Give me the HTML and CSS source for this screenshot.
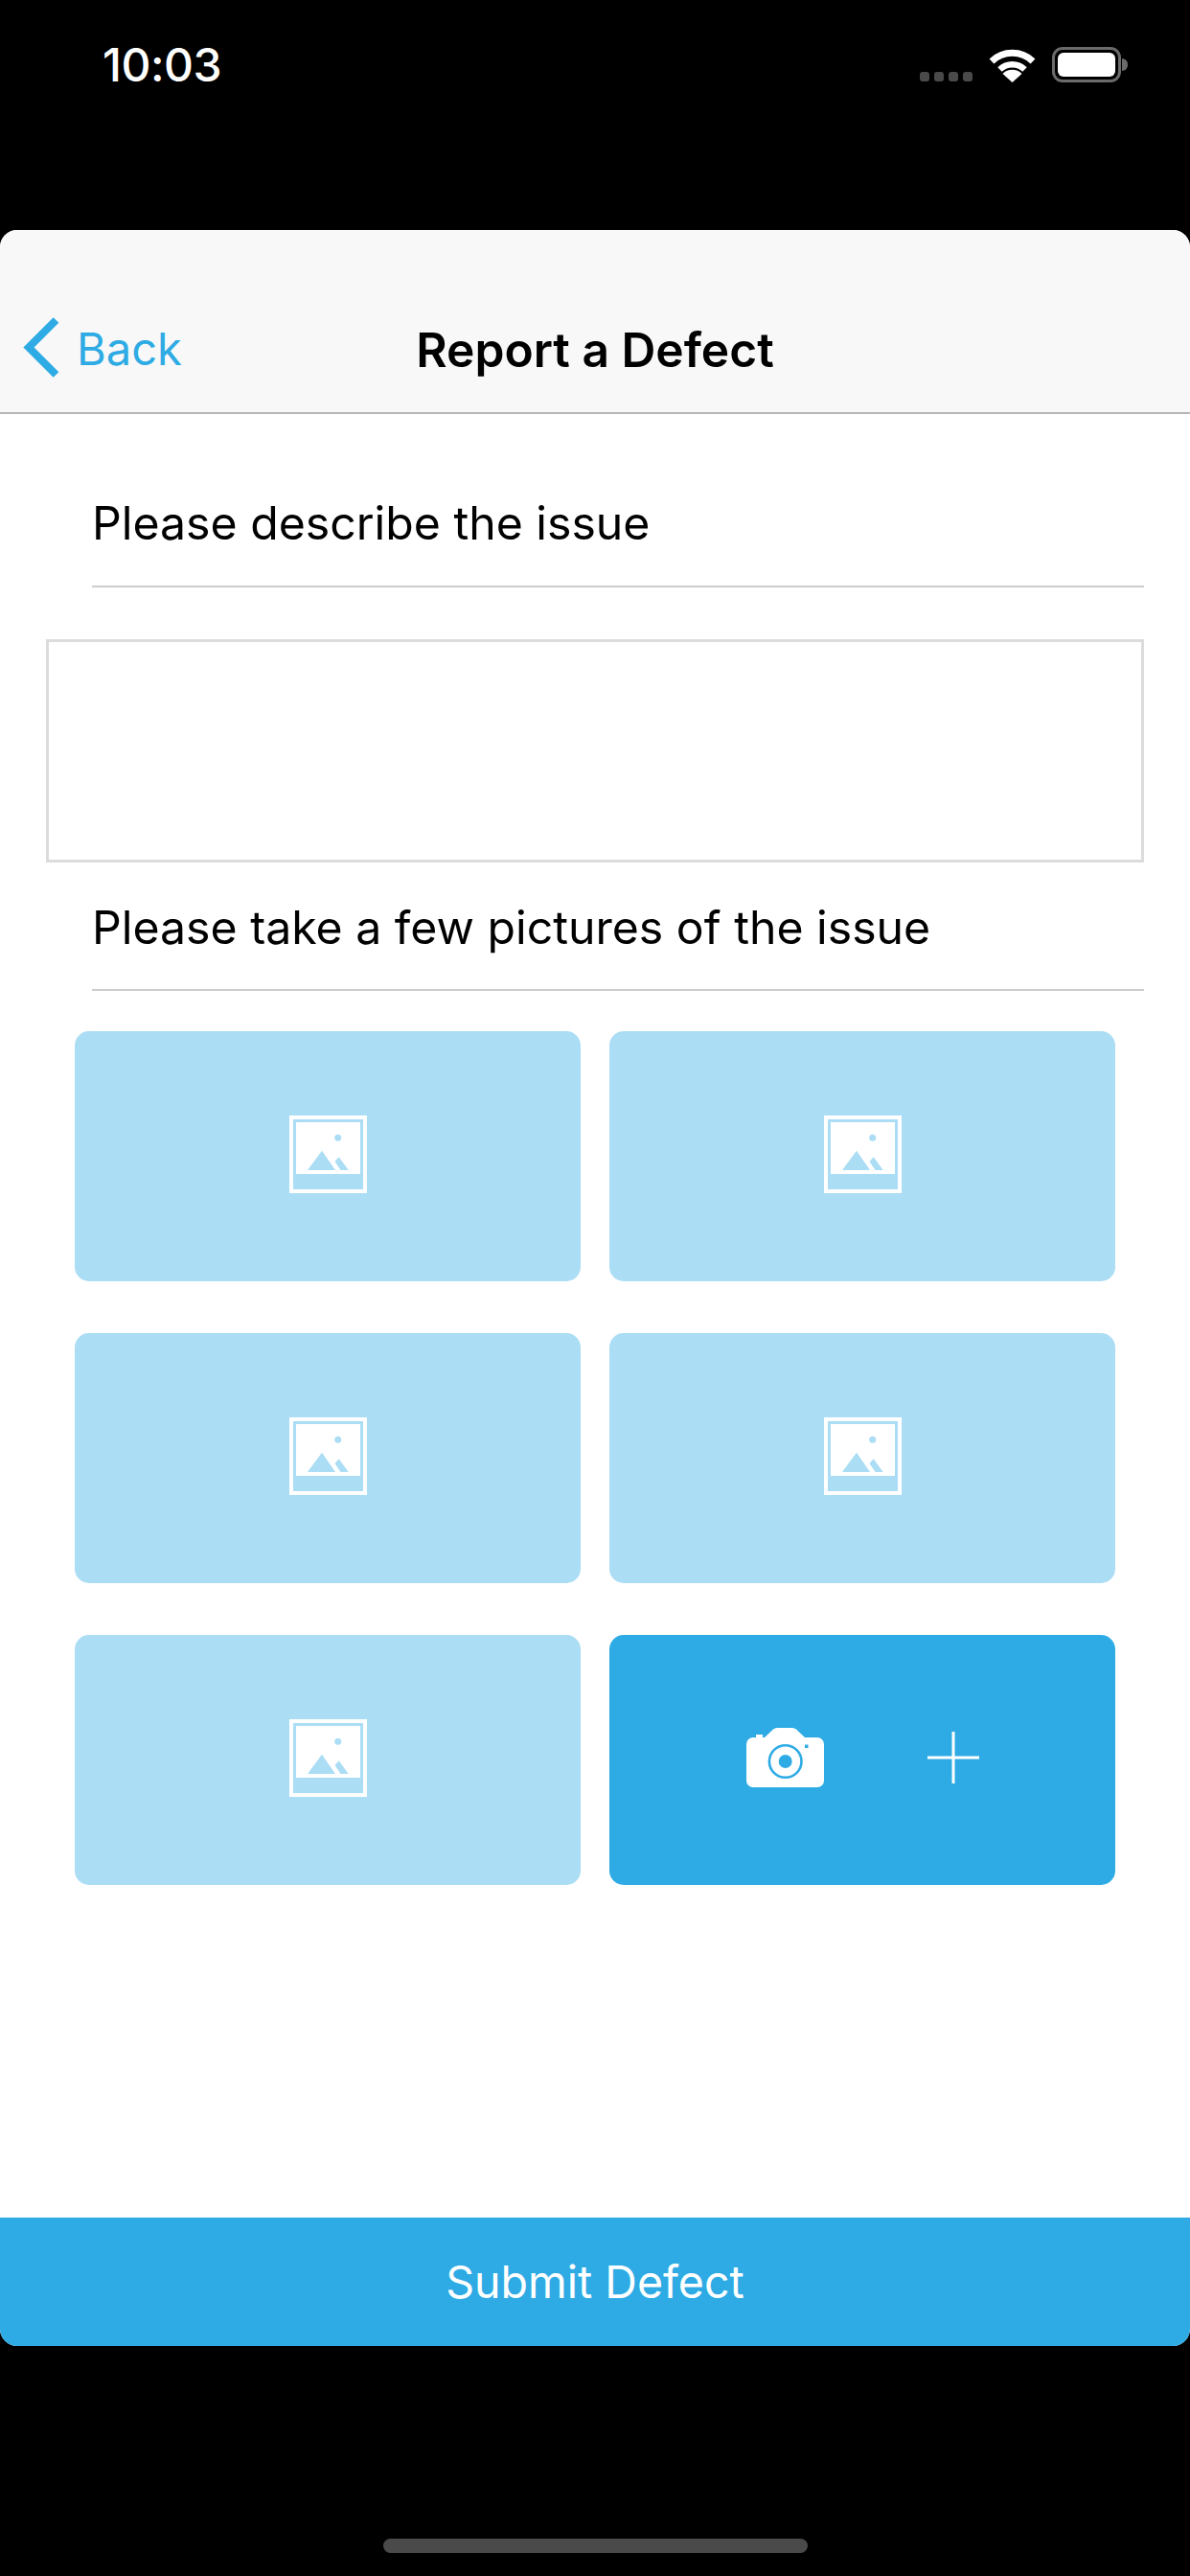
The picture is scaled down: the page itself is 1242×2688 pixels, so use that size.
FILE: index.html
```html
<!DOCTYPE html>
<html lang="en">
<head>
    <meta charset="UTF-8">
    <title>Report a Defect</title>
    <link rel="stylesheet" href="styles.css">
</head>
<body>
    <svg class="sprites" width="0" height="0">
        <symbol id="photo" viewBox="0 0 81 81">
            <rect x="2" y="2" width="77" height="77" fill="none" stroke="#fff" stroke-width="4"/>
            <rect x="7" y="7" width="67" height="54" fill="#fff"/>
            <circle cx="50.7" cy="23.3" r="3.5" fill="#abddf5"/>
            <polygon points="19,57 34,36.7 48,57" fill="#abddf5"/>
            <polygon points="47.5,48 51.7,43.3 61.7,57 53.5,57" fill="#abddf5"/>
        </symbol>
    </svg>

    <header class="status-bar">
        <span class="time">10:03</span>
        <div class="status-icons">
            <div class="signal"><i></i><i></i><i></i><i></i></div>
            <svg class="wifi" width="49" height="36" viewBox="0 0 49 36">
                <path d="M3 14 A31 31 0 0 1 46 14" fill="none" stroke="#fff" stroke-width="7"/>
                <path d="M11.5 22.5 A19 19 0 0 1 37.5 22.5" fill="none" stroke="#fff" stroke-width="6.5"/>
                <path d="M24.5 36 L14.5 27 A14 14 0 0 1 34.5 27 Z" fill="#fff"/>
            </svg>
            <div class="battery"><div class="battery-level"></div></div>
            <div class="battery-nub"></div>
        </div>
    </header>

    <main class="sheet">
        <nav class="nav-bar">
            <a class="back">
                <svg class="back-arrow" width="38" height="63" viewBox="0 0 38 63">
                    <path d="M34.5 3 L6 31.5 L34.5 60" fill="none" stroke="#2eabe4" stroke-width="8"/>
                </svg>
                <span class="back-label">Back</span>
            </a>
            <h1 class="nav-title">Report a Defect</h1>
        </nav>

        <div class="field-label first"><span>Please describe the issue</span></div>
        <textarea class="description"></textarea>
        <div class="field-label"><span>Please take a few pictures of the issue</span></div>

        <div class="photo-grid">
            <div class="tile"><svg class="photo-icon"><use href="#photo"/></svg></div>
            <div class="tile"><svg class="photo-icon"><use href="#photo"/></svg></div>
            <div class="tile"><svg class="photo-icon"><use href="#photo"/></svg></div>
            <div class="tile"><svg class="photo-icon"><use href="#photo"/></svg></div>
            <div class="tile"><svg class="photo-icon"><use href="#photo"/></svg></div>
            <div class="tile add">
                <svg width="81" height="62" viewBox="0 0 81 62">
                    <rect x="10" y="7" width="7" height="6" fill="#fff"/>
                    <path d="M19 10 L28 1.5 Q30 0 32 0 L48 0 Q50 0 52 1.5 L61 10 Z" fill="#fff"/>
                    <rect x="0" y="10" width="81" height="52" rx="7" fill="#fff"/>
                    <circle cx="40.7" cy="35" r="16.8" fill="#fff" stroke="#2eabe4" stroke-width="2.6"/>
                    <circle cx="40.7" cy="35" r="7" fill="#2eabe4"/>
                    <rect x="61" y="17.5" width="3.5" height="3.5" fill="#2eabe4"/>
                </svg>
                <svg width="54" height="54" viewBox="0 0 54 54">
                    <path d="M27 0 V54 M0 27 H54" stroke="#fff" stroke-width="3"/>
                </svg>
            </div>
        </div>

        <button class="submit">Submit Defect</button>
    </main>

    <div class="home-area"><div class="home-bar"></div></div>
</body>
</html>
```

FILE: styles.css
```css
* {
    box-sizing: border-box;
}
html, body {
    margin: 0;
    height: 100%;
}
body {
    background-color: #000;
    font-family: Inter, "Liberation Sans", sans-serif;
    width: 1242px;
    height: 2688px;
    overflow: hidden;
    display: flex;
    flex-direction: column;
}
.sprites {
    display: block;
    height: 0;
}

/* Status bar */
.status-bar {
    height: 240px;
    padding: 43px 65px 0 107px;
    display: flex;
    justify-content: space-between;
    align-items: flex-start;
    color: #fff;
}
.time {
    font-size: 48px;
    font-weight: 500;
    line-height: 50px;
    letter-spacing: -0.5px;
}
.status-icons {
    display: flex;
    align-items: flex-start;
    padding-top: 6px;
}
.signal {
    display: flex;
    gap: 5px;
    margin-top: 26px;
    margin-right: 17px;
}
.signal i {
    width: 10px;
    height: 10px;
    border-radius: 3px;
    background-color: #4a4a4a;
}
.wifi {
    margin-top: 1px;
    margin-right: 17px;
}
.battery {
    width: 72px;
    height: 37px;
    border: 3px solid #6b6b6b;
    border-radius: 11px;
    padding: 3px;
}
.battery-level {
    width: 100%;
    height: 100%;
    border-radius: 6px;
    background-color: #fff;
}
.battery-nub {
    width: 6px;
    height: 13px;
    margin: 12px 0 0 1px;
    border-radius: 0 6px 6px 0;
    background-color: #6b6b6b;
}

/* Sheet */
.sheet {
    height: 2208px;
    background-color: #fff;
    border-radius: 18px;
    overflow: hidden;
    display: flex;
    flex-direction: column;
}
.nav-bar {
    height: 192px;
    padding-top: 91px;
    background-color: #f8f8f8;
    border-bottom: 2px solid #b8b8b8;
    position: relative;
    display: flex;
    justify-content: center;
}
.back {
    position: absolute;
    left: 24px;
    top: 91px;
    display: flex;
    align-items: center;
    gap: 18px;
    color: #2eabe4;
    font-size: 47px;
}
.back-label {
    position: relative;
    top: 1px;
}
.nav-title {
    margin: 3px 0 0;
    font-size: 49.7px;
    font-weight: 600;
    line-height: 63px;
    color: #000;
}

.field-label {
    margin-left: 96px;
    margin-right: 48px;
    height: 134px;
    padding-top: 38px;
    border-bottom: 2px solid #cdcdcd;
    font-size: 48.2px;
    line-height: 60px;
    color: #000;
}
.field-label.first {
    height: 181px;
    padding-top: 84px;
}
.description {
    display: block;
    width: 1146px;
    height: 233px;
    margin: 54px 0 0 48px;
    border: 3px solid #dcdcdc;
    border-radius: 0;
    resize: none;
    outline: none;
}

/* Pictures */
.photo-grid {
    display: grid;
    grid-template-columns: 528px 528px;
    grid-auto-rows: 261px;
    column-gap: 30px;
    row-gap: 54px;
    padding: 42px 78px 0;
}
.tile {
    background-color: #abddf5;
    border-radius: 15px;
    display: flex;
    align-items: center;
    justify-content: center;
    padding-bottom: 5px;
}
.photo-icon {
    width: 81px;
    height: 81px;
}
.tile.add {
    background-color: #2eabe4;
    gap: 108px;
}

.submit {
    margin-top: auto;
    height: 134px;
    border: none;
    background-color: #2eabe4;
    color: #fff;
    font-family: inherit;
    font-size: 46.5px;
}

/* Home indicator */
.home-area {
    flex: 1;
    display: flex;
    justify-content: center;
    padding-top: 201px;
}
.home-bar {
    width: 443px;
    height: 15px;
    border-radius: 8px;
    background-color: #4a4a4a;
}
```
